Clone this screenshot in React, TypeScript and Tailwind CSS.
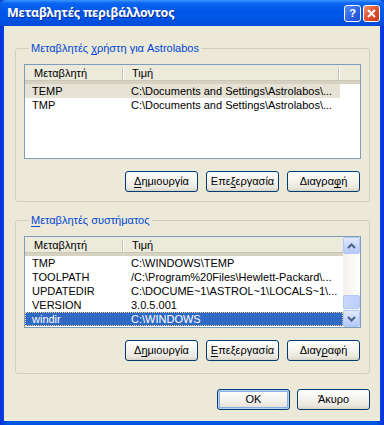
import React from "react";

function U({ children }: { children: React.ReactNode }) {
  return <span className="underline underline-offset-[2px] decoration-[1px]">{children}</span>;
}

function Btn({ children, def }: { children: React.ReactNode; def?: boolean }) {
  return (
    <div
      className={
        def
          ? "h-[21px] w-[73px] rounded-[3px] border border-[#003C74] bg-[linear-gradient(180deg,#FFFFFF_0%,#F5F4EF_45%,#E8E6DC_85%,#D8D2C6_100%)] shadow-[inset_0_0_0_1px_#BCD4F6,inset_0_0_0_2px_#89ADE4] flex items-center justify-center text-[11px] text-black"
          : "h-[21px] w-[73px] rounded-[3px] border border-[#003C74] bg-[linear-gradient(180deg,#FFFFFF_0%,#F5F4EF_45%,#E8E6DC_85%,#D8D2C6_100%)] flex items-center justify-center text-[11px] text-black"
      }
    >
      <span className="leading-none">{children}</span>
    </div>
  );
}

function HeaderDivider() {
  return (
    <div className="flex h-full items-center">
      <div className="h-[13px] w-[1px] bg-[#C7C5B2]" />
      <div className="h-[13px] w-[1px] bg-white" />
    </div>
  );
}

function Header({ col2Divider }: { col2Divider?: boolean }) {
  return (
    <div className="h-[19px] shrink-0 flex bg-[#EBEADB] border-b-[3px] border-b-[#D6D2C2] shadow-[inset_0_-1px_0_#CBC7B8]">
      <div className="w-[97px] pl-[9px] flex items-center text-[11px] text-black">Μεταβλητή</div>
      <HeaderDivider />
      <div className="w-[214px] pl-[8px] flex items-center text-[11px] text-black">Τιμή</div>
      {col2Divider ? <HeaderDivider /> : null}
      <div className="flex-1" />
    </div>
  );
}

function Row({ name, value, variant }: { name: string; value: string; variant?: "gray" | "blue" }) {
  if (variant === "blue") {
    return (
      <div className="h-[14px] flex items-center bg-[#316AC5] text-white outline outline-1 outline-dotted outline-[#F0D080] -outline-offset-1">
        <div className="w-[99px] pl-[7px] text-[11px] leading-none whitespace-nowrap overflow-hidden">{name}</div>
        <div className="flex-1 pl-[7px] text-[11px] leading-none whitespace-nowrap overflow-hidden">{value}</div>
      </div>
    );
  }
  return (
    <div className="h-[14px] flex items-center text-black">
      <div
        className={
          variant === "gray"
            ? "w-[315px] flex items-center h-full bg-[#E6E3D6]"
            : "w-[315px] flex items-center h-full"
        }
      >
        <div className="w-[99px] pl-[7px] text-[11px] leading-none whitespace-nowrap overflow-hidden">{name}</div>
        <div className="flex-1 pl-[7px] text-[11px] leading-none whitespace-nowrap overflow-hidden">{value}</div>
      </div>
    </div>
  );
}

function Chevron({ up }: { up?: boolean }) {
  return (
    <svg width="9" height="6" viewBox="0 0 9 6">
      {up ? (
        <path d="M1 5 L4.5 1.5 L8 5" fill="none" stroke="#4D6185" strokeWidth="2" />
      ) : (
        <path d="M1 1 L4.5 4.5 L8 1" fill="none" stroke="#4D6185" strokeWidth="2" />
      )}
    </svg>
  );
}

function ScrollBtn({ up }: { up?: boolean }) {
  return (
    <div className="h-[17px] w-[17px] rounded-[2px] border border-[#B4C8F6] bg-[linear-gradient(180deg,#E1EAFE_0%,#C9D8FC_50%,#B4C9F7_100%)] flex items-center justify-center">
      <Chevron up={up} />
    </div>
  );
}

function GroupBox({ title, children }: { title: React.ReactNode; children: React.ReactNode }) {
  return (
    <fieldset className="border border-[#D0D0BF] rounded-[3px] pl-[8px] pr-[8px] pt-[9px]">
      <legend className="ml-[5px] px-[2px] text-[11px] leading-[13px] text-[#0046D5]">{title}</legend>
      {children}
    </fieldset>
  );
}

export default function App() {
  return (
    <div className="w-[384px] h-[425px] flex flex-col bg-[#0A4FDB] font-['Liberation_Sans',Arial,sans-serif] overflow-hidden">
      {/* Title bar */}
      <div className="h-[26px] shrink-0 flex items-center pl-[7px] pr-[4px] bg-[linear-gradient(180deg,#3D95FF_0%,#0A66F0_12%,#0058E8_40%,#0055E5_70%,#0049D6_100%)] rounded-t-[6px]">
        <div className="flex-1 text-white text-[12.5px] font-bold font-['Noto_Sans',sans-serif] tracking-[-0.2px] [text-shadow:1px_1px_0_#0A2A9A]">
          Μεταβλητές περιβάλλοντος
        </div>
        <div className="flex gap-[2px]">
          <div className="h-[17px] w-[17px] rounded-[3px] border border-white bg-[linear-gradient(135deg,#5A8CF7_0%,#2C60E0_60%,#1B4ECF_100%)] flex items-center justify-center text-white text-[11px] font-bold leading-none">
            ?
          </div>
          <div className="h-[17px] w-[17px] rounded-[3px] border border-white bg-[linear-gradient(135deg,#F0916F_0%,#E0522E_50%,#C8391A_100%)] flex items-center justify-center">
            <svg width="9" height="9" viewBox="0 0 9 9">
              <path d="M1 1 L8 8 M8 1 L1 8" stroke="white" strokeWidth="2" />
            </svg>
          </div>
        </div>
      </div>
      {/* Frame */}
      <div className="flex-1 flex px-[4px] pb-[4px] bg-[linear-gradient(90deg,#0831D9_0%,#0055E5_2%,#0055E5_98%,#0831D9_100%)]">
        <div className="flex-1 flex flex-col bg-[#ECE9D8] pt-[16px] pl-[11px] pr-[10px]">
          <GroupBox
            title={
              <>
                Μεταβλητές <U>χ</U>ρήστη για Astrolabos
              </>
            }
          >
            <div className="h-[95px] border border-[#7F9DB9] bg-white flex flex-col">
              <Header col2Divider />
              <Row name="TEMP" value="C:\Documents and Settings\Astrolabos\..." variant="gray" />
              <Row name="TMP" value="C:\Documents and Settings\Astrolabos\..." />
            </div>
            <div className="mt-[12px] mb-[9px] flex justify-end gap-[8px] pr-[1px]">
              <Btn>
                <U>Δ</U>ημιουργία
              </Btn>
              <Btn>
                Επε<U>ξ</U>εργασία
              </Btn>
              <Btn>
                Διαγρα<U>φ</U>ή
              </Btn>
            </div>
          </GroupBox>
          <div className="mt-[12px]">
            <GroupBox
              title={
                <>
                  <U>Μ</U>εταβλητές συστήματος
                </>
              }
            >
              <div className="h-[92px] border border-[#7F9DB9] bg-white flex">
                <div className="flex-1 flex flex-col min-w-0">
                  <Header />
                  <Row name="TMP" value="C:\WINDOWS\TEMP" />
                  <Row name="TOOLPATH" value="/C:\Program%20Files\Hewlett-Packard\..." />
                  <Row name="UPDATEDIR" value="C:\DOCUME~1\ASTROL~1\LOCALS~1\..." />
                  <Row name="VERSION" value="3.0.5.001" />
                  <Row name="windir" value="C:\WINDOWS" variant="blue" />
                </div>
                <div className="w-[17px] flex flex-col bg-[linear-gradient(90deg,#F3F1EC_0%,#FEFEFB_100%)]">
                  <ScrollBtn up />
                  <div className="flex-1" />
                  <div className="h-[14px] w-[17px] rounded-[2px] border border-[#B4C8F6] bg-[linear-gradient(90deg,#C9D8FC_0%,#BCCFFA_100%)] mb-[1px]" />
                  <ScrollBtn />
                </div>
              </div>
              <div className="mt-[12px] mb-[12px] flex justify-end gap-[8px] pr-[1px]">
                <Btn>
                  Δ<U>η</U>μιουργία
                </Btn>
                <Btn>
                  <U>Ε</U>πεξεργασία
                </Btn>
                <Btn>
                  Διαγ<U>ρ</U>αφή
                </Btn>
              </div>
            </GroupBox>
          </div>
          <div className="mt-[15px] flex justify-end gap-[7px] pr-[0px]">
            <Btn def>OK</Btn>
            <Btn>Άκυρο</Btn>
          </div>
        </div>
      </div>
    </div>
  );
}
